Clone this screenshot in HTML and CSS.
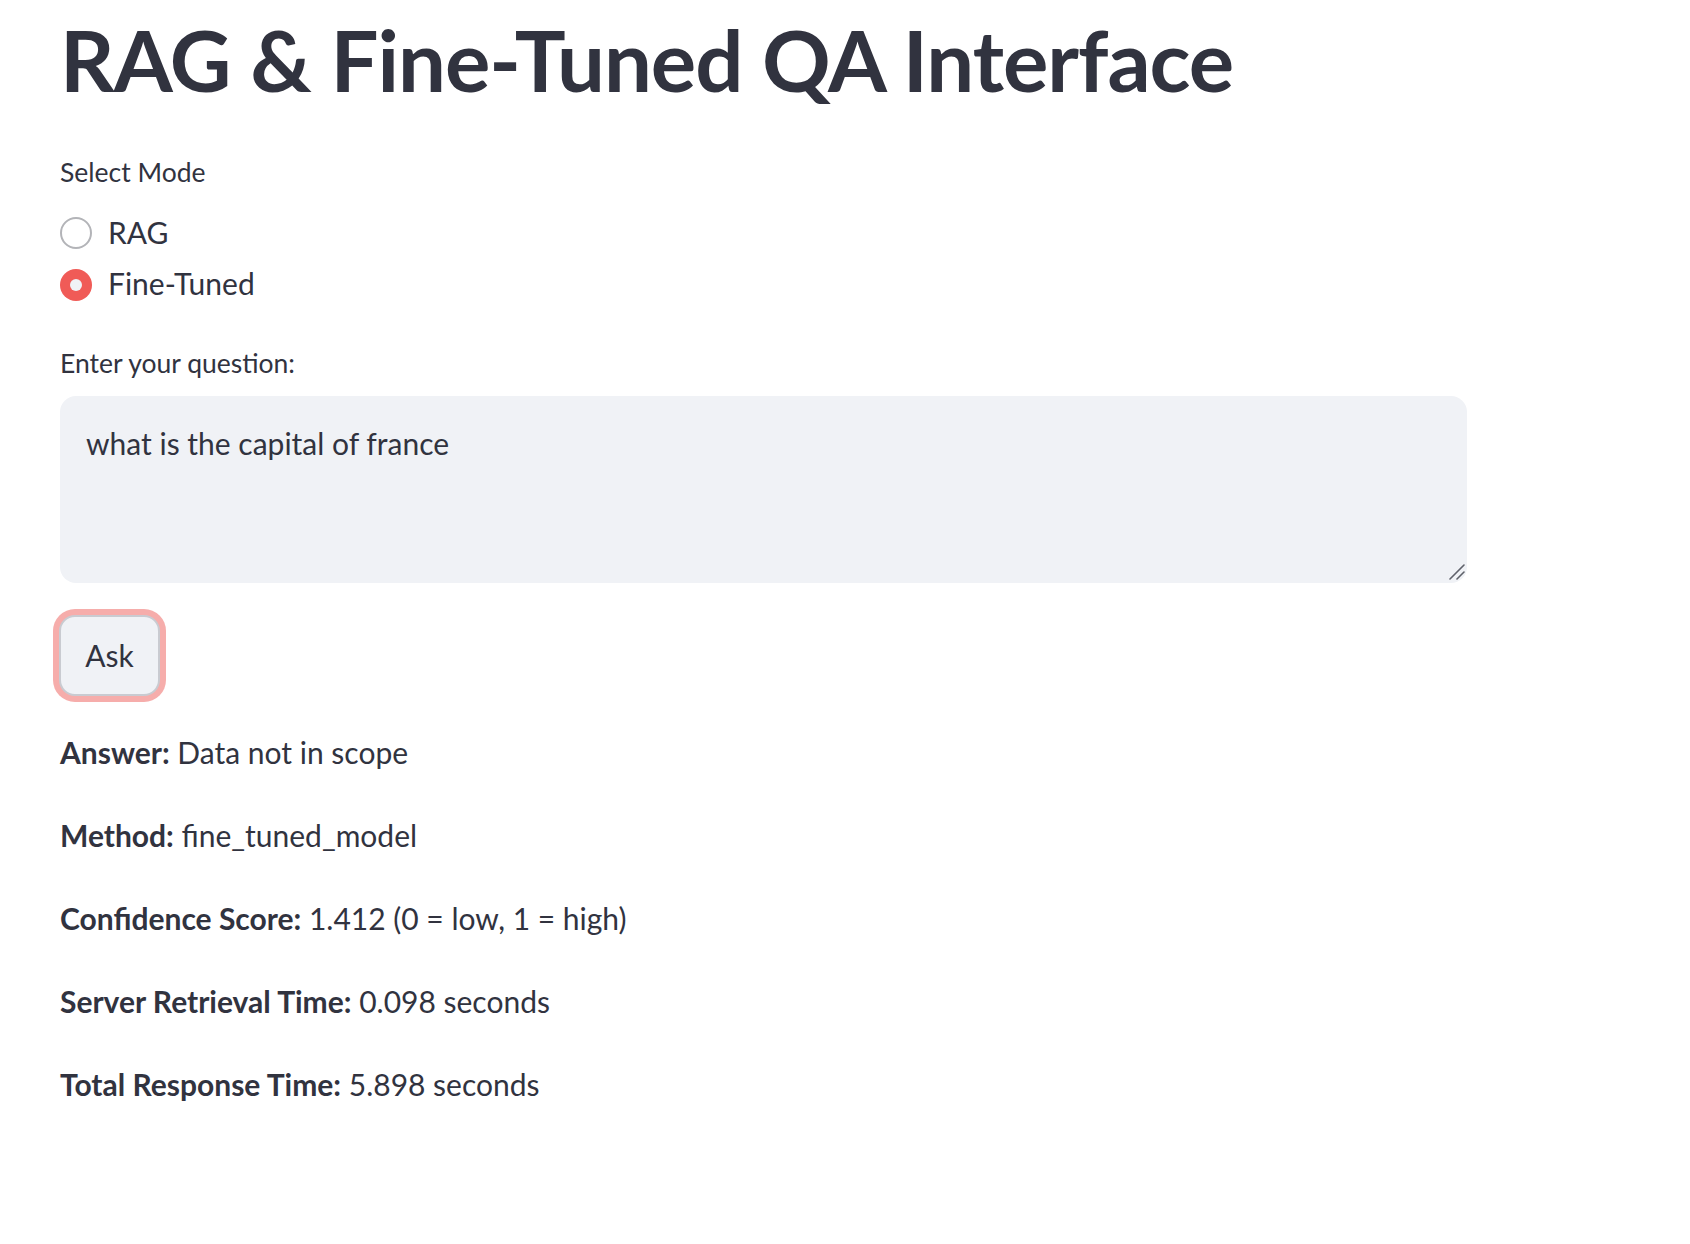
FILE: index.html
```html
<!DOCTYPE html>
<html lang="en">
<head>
<meta charset="utf-8">
<title>RAG &amp; Fine-Tuned QA Interface</title>
<link rel="stylesheet" href="styles.css">
</head>
<body>
<main class="page">
  <h1 class="title">RAG &amp; Fine-Tuned QA Interface</h1>

  <section class="field mode-field">
    <div class="label">Select Mode</div>
    <div class="radio-group">
      <label class="radio-row">
        <span class="radio"></span>
        <span class="radio-text">RAG</span>
      </label>
      <label class="radio-row">
        <span class="radio radio-checked"><span class="radio-dot"></span></span>
        <span class="radio-text">Fine-Tuned</span>
      </label>
    </div>
  </section>

  <section class="field question-field">
    <div class="label">Enter your question:</div>
    <div class="question-wrap">
      <textarea class="question" spellcheck="false">what is the capital of france</textarea>
      <svg class="resize-handle" width="16" height="16" viewBox="0 0 16 16" aria-hidden="true">
        <line x1="15" y1="1" x2="1" y2="15" />
        <line x1="15" y1="8" x2="8" y2="15" />
      </svg>
    </div>
  </section>

  <div class="button-row">
    <button class="ask">Ask</button>
  </div>

  <div class="results">
    <p class="result"><strong>Answer:</strong> Data not in scope</p>
    <p class="result"><strong>Method:</strong> fine_tuned_model</p>
    <p class="result"><strong>Confidence Score:</strong> 1.412 (0 = low, 1 = high)</p>
    <p class="result"><strong>Server Retrieval Time:</strong> 0.098 seconds</p>
    <p class="result"><strong>Total Response Time:</strong> 5.898 seconds</p>
  </div>
</main>
</body>
</html>
```

FILE: styles.css
```css
html, body {
  margin: 0;
  padding: 0;
  background: #ffffff;
}

body {
  font-family: Lato, "Noto Sans", "Liberation Sans", sans-serif;
  color: #31333f;
}

.page {
  width: 1408px;
  padding: 7px 0 0 60px;
  display: flex;
  flex-direction: column;
}

.title {
  margin: 0;
  font-size: 85px;
  font-weight: 700;
  line-height: 105.6px;
  letter-spacing: -1px;
}

.label {
  font-size: 26.5px;
  line-height: 44.8px;
}

.mode-field {
  margin-top: 37px;
}

.radio-group {
  display: flex;
  flex-direction: column;
  margin-top: 12.5px;
}

.radio-row {
  display: flex;
  align-items: center;
  height: 51.2px;
  font-size: 30px;
}

.radio {
  width: 32px;
  height: 32px;
  box-sizing: border-box;
  border-radius: 50%;
  border: 2.5px solid #b3b4b8;
  background: #ffffff;
  margin-top: 2px;
  display: flex;
  align-items: center;
  justify-content: center;
}

.radio-checked {
  border: none;
  background: #f05b57;
}

.radio-dot {
  width: 12px;
  height: 12px;
  border-radius: 50%;
  background: #f0f2f6;
}

.radio-text {
  margin-left: 16px;
  line-height: 51.2px;
}

.question-field {
  margin-top: 32px;
}

.question-wrap {
  position: relative;
  width: 1407px;
  margin-top: 9.5px;
}

.question {
  display: block;
  box-sizing: border-box;
  width: 1407px;
  height: 187px;
  padding: 22px 26px 16px;
  border: none;
  border-radius: 16px;
  background: #f0f2f6;
  font-family: inherit;
  font-size: 30px;
  line-height: 51.2px;
  color: #31333f;
  resize: none;
  outline: none;
}

.resize-handle {
  position: absolute;
  right: 2px;
  bottom: 3px;
}

.resize-handle line {
  stroke: #5f616a;
  stroke-width: 1.6;
  stroke-linecap: round;
}

.button-row {
  margin-top: 32px;
  display: flex;
}

.ask {
  box-sizing: border-box;
  width: 101px;
  height: 81px;
  margin-left: -1px;
  border: 2px solid #c9cbd1;
  border-radius: 16px;
  background: #f0f2f6;
  box-shadow: 0 0 0 6px #f6adab;
  font-family: inherit;
  font-size: 30px;
  color: #31333f;
  padding: 0;
}

.results {
  margin-top: 31px;
  display: flex;
  flex-direction: column;
  gap: 32px;
}

.result {
  margin: 0;
  font-size: 30px;
  line-height: 51.2px;
}

.result strong {
  font-weight: 700;
}
```
